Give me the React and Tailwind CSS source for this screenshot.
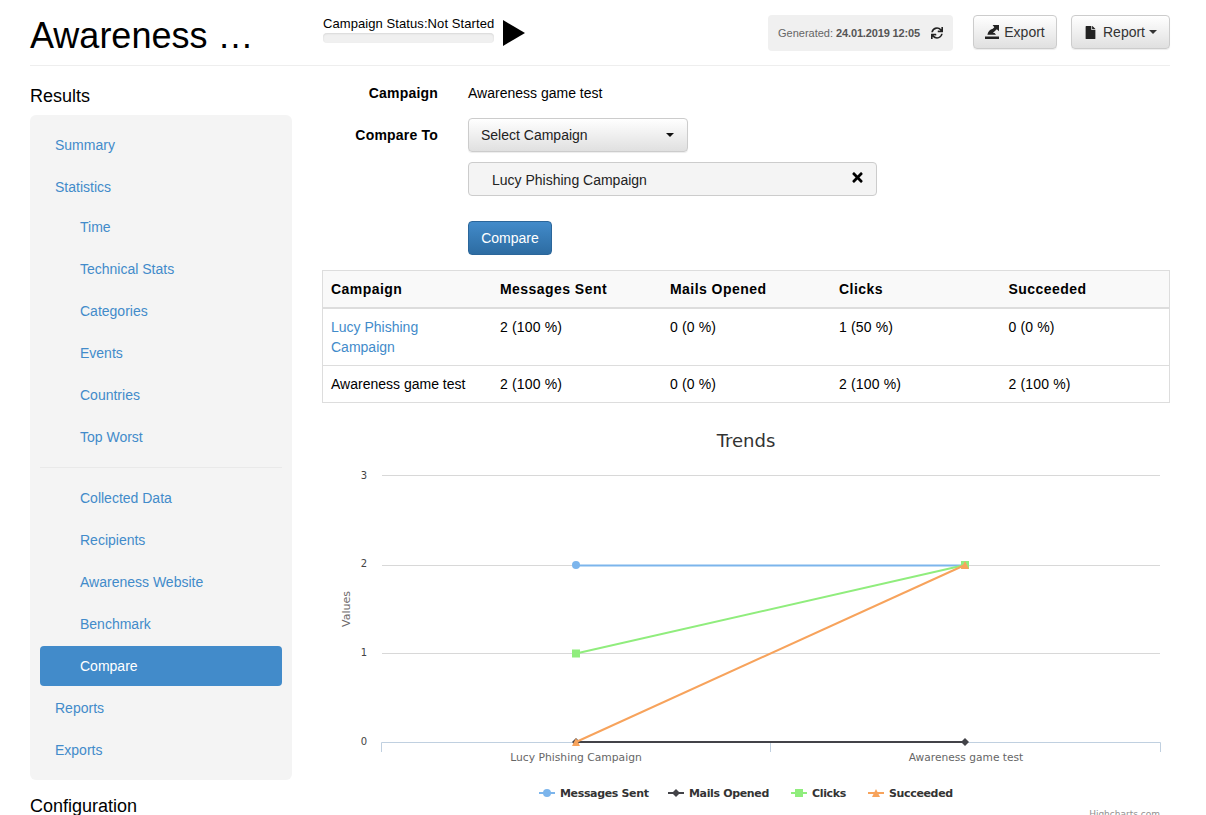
import { FaSync, FaTimes, FaFile } from 'react-icons/fa';

const statItems = ['Time', 'Technical Stats', 'Categories', 'Events', 'Countries', 'Top Worst'];
const dataItems = ['Collected Data', 'Recipients', 'Awareness Website', 'Benchmark'];

const rows = [
  { name: 'Lucy Phishing Campaign', link: true, values: ['2 (100 %)', '0 (0 %)', '1 (50 %)', '0 (0 %)'] },
  { name: 'Awareness game test', link: false, values: ['2 (100 %)', '0 (0 %)', '2 (100 %)', '2 (100 %)'] },
];

const NavLink = ({ label, sub, active, className = '' }) => (
  <a
    href="#"
    className={`block h-10 leading-10 rounded text-sm ${sub ? 'pl-10' : 'pl-[15px]'} ${
      active ? 'bg-[#428bca] text-white' : 'text-[#428bca]'
    } ${className}`}
  >
    {label}
  </a>
);

const Sidebar = () => (
  <aside className="w-[262px] shrink-0">
    <h4 className="text-lg leading-5 mt-5 mb-[9px]">Results</h4>
    <nav className="bg-[#f4f4f4] rounded-md p-2.5">
      <NavLink label="Summary" className="mb-0.5" />
      <NavLink label="Statistics" />
      {statItems.map((s) => (
        <NavLink key={s} label={s} sub className="mb-0.5 last:mb-0" />
      ))}
      <div className="h-px bg-[#e9e9e9] mt-2.5 mb-2.5" />
      {dataItems.map((s) => (
        <NavLink key={s} label={s} sub className="mb-0.5" />
      ))}
      <NavLink label="Compare" sub active className="mb-0.5" />
      <NavLink label="Reports" className="mb-0.5" />
      <NavLink label="Exports" />
    </nav>
    <h4 className="text-lg leading-5 mt-4">Configuration</h4>
  </aside>
);

const ExportIcon = () => (
  <svg width="14" height="14" viewBox="0 0 14 14" fill="#222">
    <path d="M0 11.5h14V14H0z" />
    <path d="M7.6 0H14v6.2l-2.2-2-3.9 3.9H9.6L11 9.8H2.4C3 6.6 5 4.4 7.8 3.8l1.5-1.6z" />
  </svg>
);

const Header = () => (
  <header className="h-[66px] border-b border-[#eee] flex items-start">
    <h1 className="w-[293px] shrink-0 text-4xl leading-10 mt-4">Awareness …</h1>
    <div className="w-[171px] shrink-0 mt-[15px]">
      <div className="text-[13px] tracking-[0.08px] leading-[18px] whitespace-nowrap">Campaign Status:Not Started</div>
      <div className="h-2.5 bg-[#f0f0f0] rounded-sm mt-0 shadow-[inset_0_1px_2px_rgba(0,0,0,0.1)]" />
    </div>
    <svg width="22" height="26" viewBox="0 0 22 26" className="ml-[9px] mt-5">
      <path d="M0 0l22 13L0 26z" fill="#000" />
    </svg>
    <div className="ml-auto mt-[15px] h-9 w-[185px] bg-[#f0f0f0] rounded flex items-center pl-2.5 text-[11px] text-[#666]">
      <span>Generated:&nbsp;</span>
      <b className="text-[#555] tracking-[-0.15px]">24.01.2019 12:05</b>
      <FaSync className="ml-[11px] text-xs text-[#222]" />
    </div>
    <button className="ml-5 mt-[15px] h-[34px] w-[84px] rounded border border-[#ccc] bg-linear-to-b from-white to-[#e0e0e0] shadow-[0_1px_1px_rgba(0,0,0,0.075)] text-sm text-[#333] flex items-center justify-center gap-[5px]">
      <ExportIcon />
      Export
    </button>
    <button className="ml-3.5 mt-[15px] h-[34px] w-[99px] rounded border border-[#ccc] bg-linear-to-b from-white to-[#e0e0e0] shadow-[0_1px_1px_rgba(0,0,0,0.075)] text-sm text-[#333] flex items-center justify-center gap-1.5">
      <FaFile className="text-[13px] text-[#222]" />
      <span>Report</span>
      <span className="-ml-0.5 border-x-4 border-x-transparent border-t-4 border-t-[#333]" />
    </button>
  </header>
);

const CompareForm = () => (
  <div>
    <div className="flex items-center h-5 mt-[17px]">
      <label className="w-[116px] text-right font-bold text-sm tracking-[0.2px]">Campaign</label>
      <span className="ml-[30px] text-sm">Awareness game test</span>
    </div>
    <div className="flex items-start mt-[15px]">
      <label className="w-[116px] text-right font-bold text-sm tracking-[0.2px] leading-[34px]">Compare To</label>
      <div className="ml-[30px]">
        <button className="h-[34px] w-[220px] rounded border border-[#ccc] bg-linear-to-b from-white to-[#e0e0e0] shadow-[0_1px_1px_rgba(0,0,0,0.075)] text-sm text-[#222] flex items-center justify-between pl-3 pr-[13px]">
          Select Campaign
          <span className="border-x-4 border-x-transparent border-t-4 border-t-[#111]" />
        </button>
        <div className="mt-2.5 h-[34px] w-[409px] rounded border border-[#ccc] bg-[#f4f4f4] flex items-center justify-between pl-[23px] pr-[11px] text-sm text-[#222]">
          <span className="pt-0.5">Lucy Phishing Campaign</span>
          <FaTimes className="text-[15px] text-black -mt-1" />
        </div>
        <button className="mt-[25px] block h-[34px] w-[84px] rounded border border-[#2b669a] bg-linear-to-b from-[#428bca] to-[#2d6ca2] text-sm text-white">
          Compare
        </button>
      </div>
    </div>
  </div>
);

const CompareTable = () => (
  <table className="mt-[15px] w-[848px] table-fixed border-collapse border border-[#ddd] text-sm">
    <thead>
      <tr className="bg-[#f9f9f9] h-[37px] border-b-2 border-[#ddd] text-left">
        <th className="w-[169.5px] px-2 font-bold tracking-[0.45px]">Campaign</th>
        <th className="w-[170px] px-2 font-bold tracking-[0.45px]">Messages Sent</th>
        <th className="w-[169px] px-2 font-bold tracking-[0.45px]">Mails Opened</th>
        <th className="w-[169.5px] px-2 font-bold tracking-[0.45px]">Clicks</th>
        <th className="px-2 font-bold tracking-[0.45px]">Succeeded</th>
      </tr>
    </thead>
    <tbody>
      {rows.map((r) => (
        <tr key={r.name} className="border-b border-[#ddd] align-top leading-5">
          <td className="p-2">
            {r.link ? <a href="#" className="text-[#428bca]">{r.name}</a> : r.name}
          </td>
          {r.values.map((v, i) => (
            <td key={i} className="p-2 tracking-[0.15px]">{v}</td>
          ))}
        </tr>
      ))}
    </tbody>
  </table>
);

// chart coordinates are relative to the svg box (page x - 322, page y - 416)
const gridY = [59, 149, 237];
const yTicks = [
  { y: 63, t: '3' },
  { y: 151, t: '2' },
  { y: 240, t: '1' },
  { y: 329, t: '0' },
];

const Trends = () => (
  <svg width="848" height="399" viewBox="0 0 848 399" className="block mt-[13px] font-['DejaVu_Sans',sans-serif]">
    <text x="424" y="31" textAnchor="middle" fontSize="18" fill="#333">Trends</text>
    {gridY.map((y) => (
      <line key={y} x1="60" x2="838" y1={y + 0.5} y2={y + 0.5} stroke="#d8d8d8" />
    ))}
    {yTicks.map((t) => (
      <text key={t.t} x="45" y={t.y} textAnchor="end" fontSize="10" fill="#444">{t.t}</text>
    ))}
    <text transform="translate(28 193) rotate(-90)" textAnchor="middle" fontSize="11" fill="#6d6869">Values</text>

    <path d="M59.5 326.5H838.5M59.5 326.5V336M448.5 326.5V336M838.5 326.5V336" fill="none" stroke="#c0d0e0" />
    <text x="254" y="345" textAnchor="middle" fontSize="10.75" fill="#666">Lucy Phishing Campaign</text>
    <text x="644" y="345" textAnchor="middle" fontSize="10.65" fill="#666">Awareness game test</text>

    <path d="M254 149.5H643" fill="none" stroke="#7cb5ec" strokeWidth="2" />
    <circle cx="254" cy="149" r="4" fill="#7cb5ec" />
    <path d="M254 326H643" fill="none" stroke="#434348" strokeWidth="2" />
    <path d="M254 322l4 4-4 4-4-4zM643 322l4 4-4 4-4-4z" fill="#434348" />
    <path d="M254 237.5L643 149" fill="none" stroke="#90ed7d" strokeWidth="2" />
    <rect x="250" y="233.5" width="8" height="8" fill="#90ed7d" />
    <rect x="639" y="145" width="8" height="8" fill="#90ed7d" />
    <path d="M254 326L643 149" fill="none" stroke="#f7a35c" strokeWidth="2" />
    <path d="M254 322l4 8h-8zM643 145l4 8h-8z" fill="#f7a35c" />

    <g fontSize="11" fontWeight="bold" fill="#333" letterSpacing="-0.35">
      <path d="M217 377h16" stroke="#7cb5ec" strokeWidth="2" />
      <circle cx="225" cy="377" r="4" fill="#7cb5ec" />
      <text x="238" y="381">Messages Sent</text>
      <path d="M346 377h16" stroke="#434348" strokeWidth="2" />
      <path d="M354 373l4 4-4 4-4-4z" fill="#434348" />
      <text x="367" y="381">Mails Opened</text>
      <path d="M469 377h16" stroke="#90ed7d" strokeWidth="2" />
      <rect x="473" y="373" width="8" height="8" fill="#90ed7d" />
      <text x="490" y="381">Clicks</text>
      <path d="M546 377h16" stroke="#f7a35c" strokeWidth="2" />
      <path d="M554 373l4 8h-8z" fill="#f7a35c" />
      <text x="567" y="381">Succeeded</text>
    </g>
    <text x="838" y="401" textAnchor="end" fontSize="9" fill="#909090">Highcharts.com</text>
  </svg>
);

export default function App() {
  return (
    <div className="h-[815px] overflow-hidden bg-white text-black font-['Liberation_Sans',Arial,sans-serif]">
      <div className="w-[1140px] ml-[30px]">
        <Header />
        <div className="flex">
          <Sidebar />
          <main className="ml-[30px] w-[848px]">
            <CompareForm />
            <CompareTable />
            <Trends />
          </main>
        </div>
      </div>
    </div>
  );
}
